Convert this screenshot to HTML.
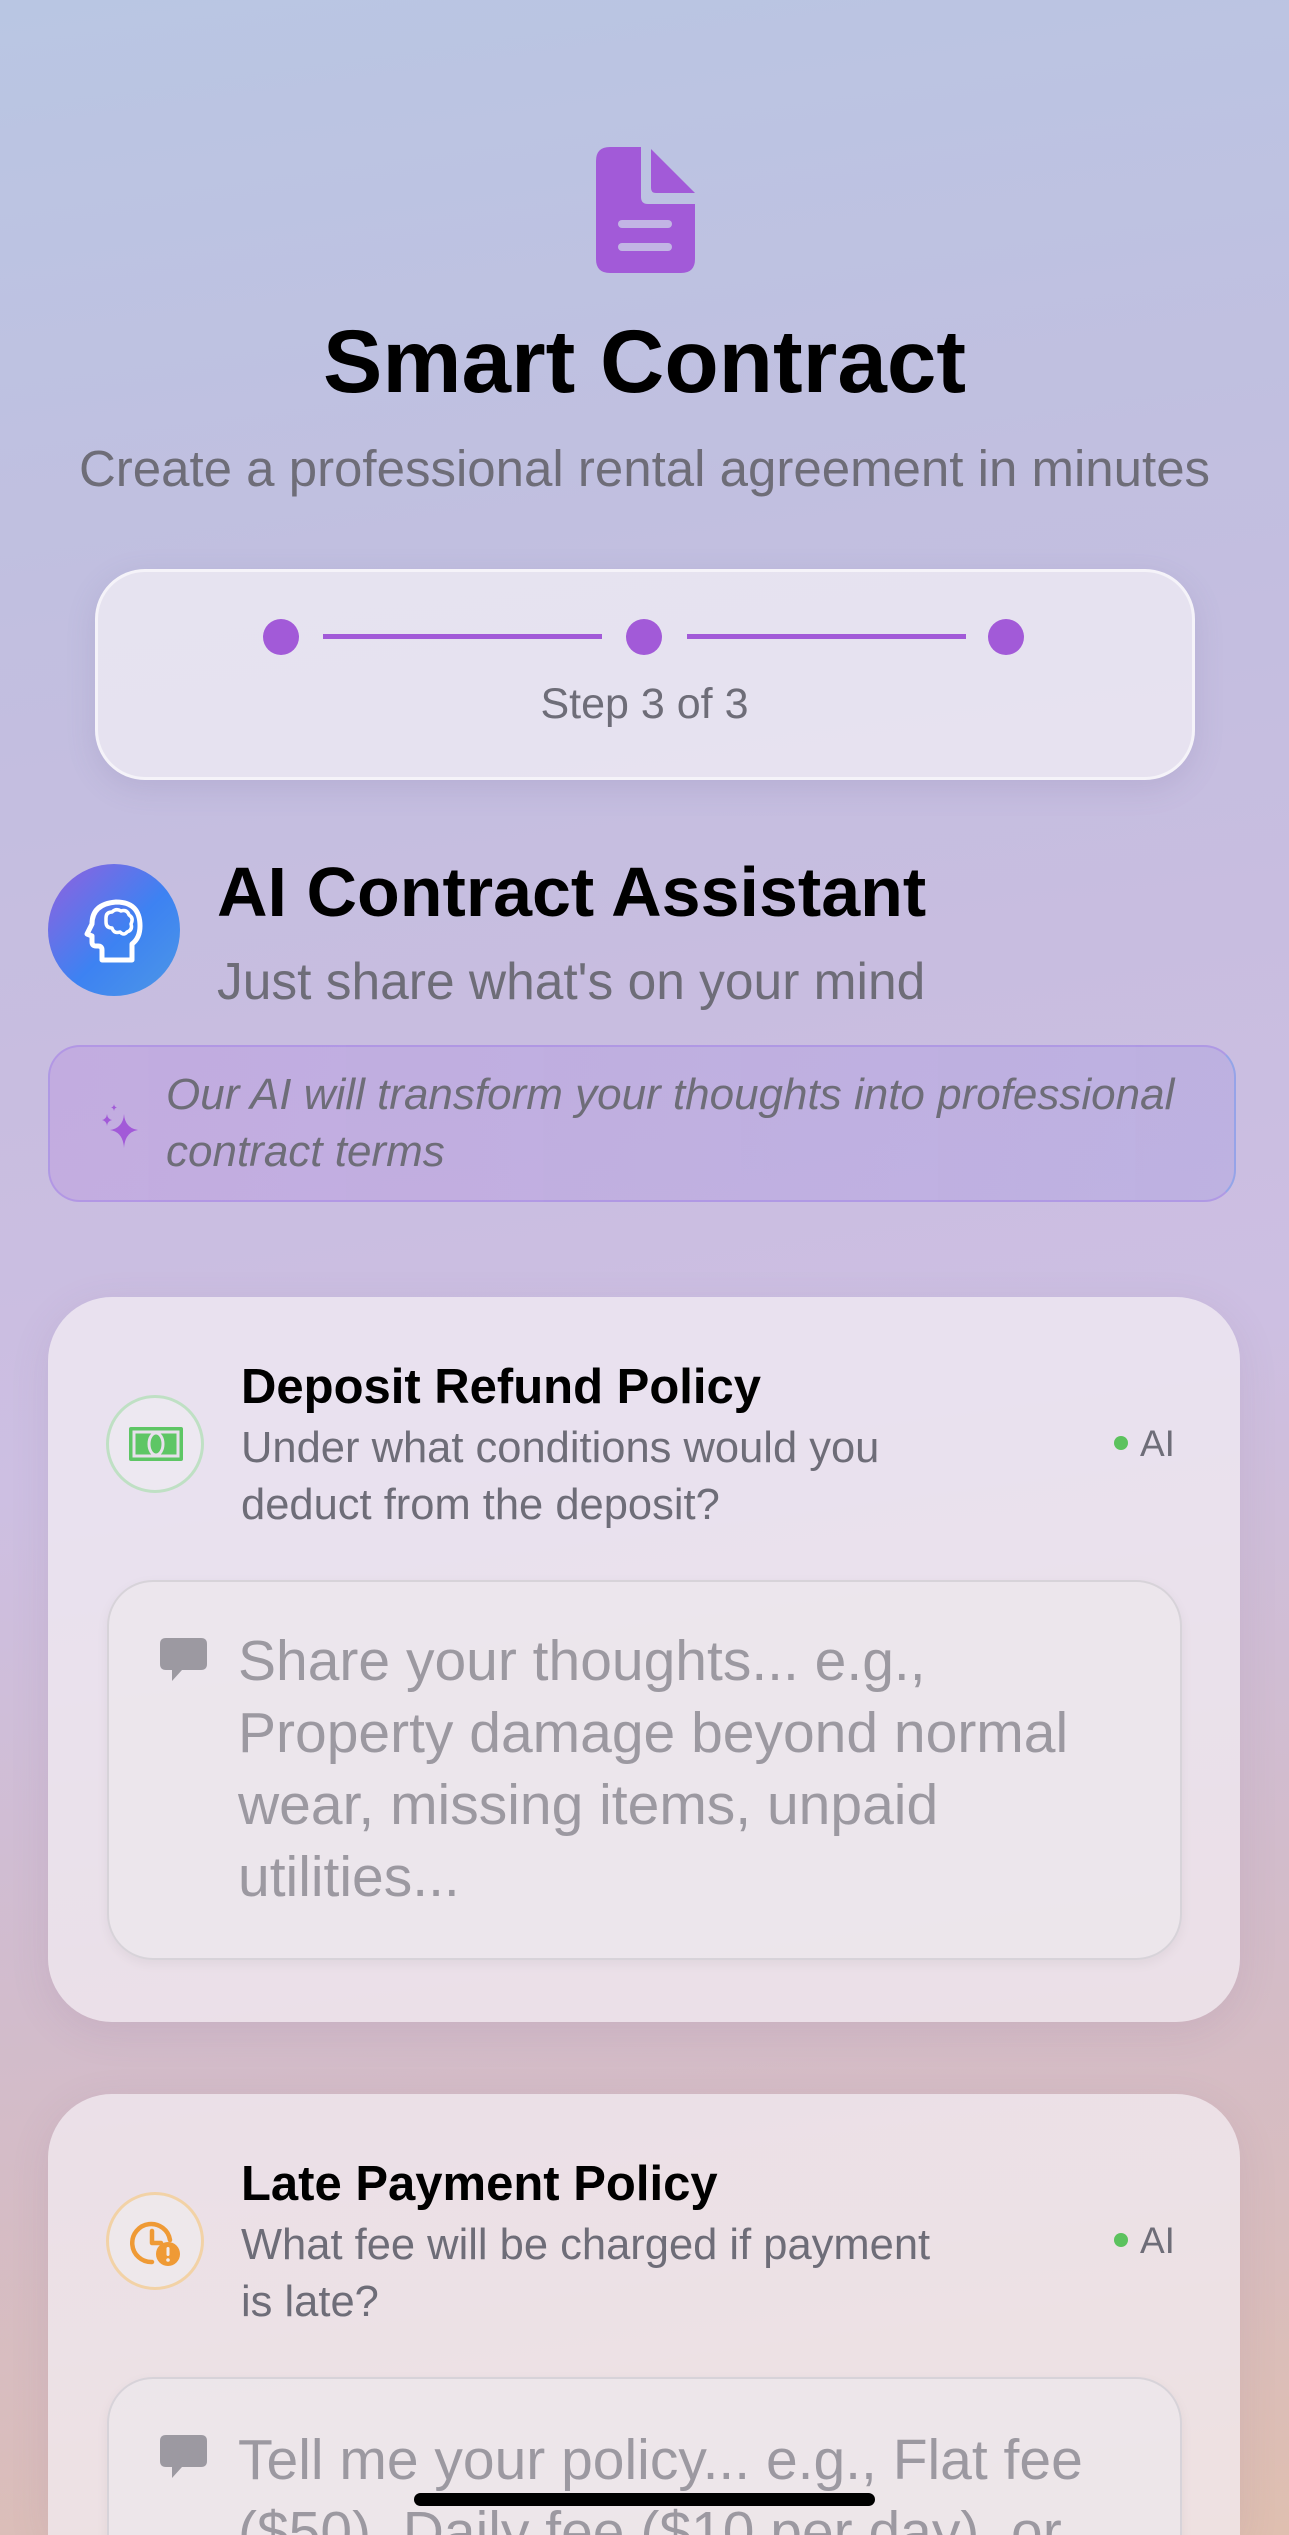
<!DOCTYPE html>
<html><head><meta charset="utf-8"><style>
*{margin:0;padding:0;box-sizing:border-box}
html{width:1289px;height:2535px;overflow:hidden;background:#d9bdbd}
body{width:1289px;height:2535px;overflow:hidden;position:relative;font-family:"Liberation Sans",sans-serif;
background:linear-gradient(172deg,#b9c6e3 0%,#c1bfe0 22%,#c8bde0 40%,#cdbfe2 55%,#d2bccb 75%,#d9bdbd 90%,#dfbfb0 100%);}
.abs{position:absolute}
.gray{color:#6e6d78}
.card{position:absolute;left:48px;width:1192px;border-radius:64px;background:rgba(244,238,244,0.72);box-shadow:0 10px 40px rgba(120,90,130,0.12);overflow:hidden}
.ta{position:absolute;left:59px;width:1075px;border-radius:46px;background:rgba(236,232,236,0.7);border:2px solid rgba(210,205,212,0.8);box-shadow:0 4px 12px rgba(0,0,0,0.05)}
.ph{position:absolute;left:190px;font-size:57px;line-height:72px;color:#9c99a1;width:900px}
.ttl{position:absolute;left:193px;font-weight:bold;font-size:49px;color:#000}
.desc{position:absolute;left:193px;font-size:43.5px;line-height:57px;color:#6e6d78;width:710px}
.ai{position:absolute;left:1066px;font-size:37px;color:#6e6d78}
.ai:before{content:"";display:inline-block;width:14px;height:14px;border-radius:50%;background:#5cc25e;margin-right:12px;vertical-align:middle;position:relative;top:-3px}
.ic{position:absolute;left:58px;width:98px;height:98px;border-radius:50%}
</style></head><body>

<svg class="abs" style="left:596px;top:147px" width="99" height="126" viewBox="0 0 99 126">
<path d="M14 0H45V50Q45 57 52 57H99V112Q99 126 85 126H14Q0 126 0 112V14Q0 0 14 0Z" fill="#a25ad8"/>
<path d="M55 2L99 46H60Q55 46 55 41Z" fill="#a25ad8"/>
<rect x="22" y="73" width="54" height="8" rx="4" fill="#c2b5e4"/>
<rect x="22" y="96" width="54" height="8" rx="4" fill="#c2b5e4"/>
</svg>

<div class="abs" style="left:0;width:1289px;top:310px;text-align:center;font-weight:bold;font-size:89px;color:#000">Smart Contract</div>
<div class="abs gray" style="left:0;width:1289px;top:439px;text-align:center;font-size:51px">Create a professional rental agreement in minutes</div>

<div class="abs" style="left:95px;top:569px;width:1100px;height:211px;border-radius:50px;background:rgba(236,233,242,0.85);border:3px solid rgba(255,255,255,0.6);box-shadow:0 8px 30px rgba(100,90,140,0.15)"></div>
<div class="abs" style="left:263px;top:619px;width:36px;height:36px;border-radius:50%;background:#a25ad8"></div>
<div class="abs" style="left:626px;top:619px;width:36px;height:36px;border-radius:50%;background:#a25ad8"></div>
<div class="abs" style="left:988px;top:619px;width:36px;height:36px;border-radius:50%;background:#a25ad8"></div>
<div class="abs" style="left:323px;top:634px;width:279px;height:5px;background:#a25ad8"></div>
<div class="abs" style="left:687px;top:634px;width:279px;height:5px;background:#a25ad8"></div>
<div class="abs gray" style="left:0;width:1289px;top:680px;text-align:center;font-size:43px">Step 3 of 3</div>

<div class="abs" style="left:48px;top:864px;width:132px;height:132px;border-radius:50%;background:linear-gradient(135deg,#9360de 0%,#3d82f2 55%,#4d97e6 100%)"></div>
<svg class="abs" style="left:84px;top:898px" width="62" height="66" viewBox="0 0 62 66" fill="none" stroke="#fff" stroke-width="5" stroke-linejoin="round" stroke-linecap="round">
<path d="M18 62V52Q18 48 14 48H12Q8 48 8 44V38L3 36L8 26Q8 6 32 4Q56 4 56 28Q56 40 48 46V62Z"/>
<path d="M22 20Q22 14 28 14Q32 10 37 13Q43 11 45 17Q50 20 47 26Q49 32 43 34Q40 38 36 34Q30 36 28 30Q22 30 22 24Z" stroke-width="3.5"/>
</svg>
<div class="abs" style="left:217px;top:852px;font-weight:bold;font-size:70px;color:#000">AI Contract Assistant</div>
<div class="abs gray" style="left:217px;top:951px;font-size:51.5px">Just share what's on your mind</div>

<div class="abs" style="left:48px;top:1045px;width:1188px;height:157px;border-radius:32px;background:linear-gradient(90deg,rgba(180,130,225,0.28),rgba(160,150,225,0.3));border:2px solid rgba(160,130,230,0.5);border-right-color:rgba(130,160,235,0.7)"></div>
<svg class="abs" style="left:98px;top:1100px" width="42" height="50" viewBox="0 0 42 50" fill="#a25ad8">
<path d="M26 14Q27 28 40 30Q27 32 26 48Q25 32 12 30Q25 28 26 14Z"/>
<path d="M9 14Q9.5 19 14 20Q9.5 21 9 26Q8.5 21 4 20Q8.5 19 9 14Z"/>
<path d="M16 4Q16.3 7 19 7.5Q16.3 8 16 11Q15.7 8 13 7.5Q15.7 7 16 4Z"/>
</svg>
<div class="abs gray" style="left:166px;top:1066px;font-size:44px;line-height:57px;font-style:italic;width:1065px">Our AI will transform your thoughts into professional contract terms</div>

<div class="card" style="top:1297px;height:725px">
  <div class="ic" style="top:98px;border:3px solid #bfe0c4;background:rgba(240,236,242,0.6)"></div>
  <svg class="abs" style="left:81px;top:130px" width="54" height="34" viewBox="0 0 54 34">
    <rect x="0" y="0" width="54" height="34" rx="2" fill="#5ec665"/>
    <rect x="5" y="5" width="44" height="24" fill="none" stroke="#e8e0ec" stroke-width="3"/>
    <ellipse cx="27" cy="17" rx="7" ry="11" fill="none" stroke="#e8e0ec" stroke-width="3"/>
  </svg>
  <div class="ttl" style="top:62px">Deposit Refund Policy</div>
  <div class="desc" style="top:123px">Under what conditions would you deduct from the deposit?</div>
  <div class="ai" style="top:126px">AI</div>
  <div class="ta" style="top:283px;height:380px"></div>
  <svg class="abs" style="left:112px;top:341px" width="47" height="44" viewBox="0 0 47 44"><path d="M6 0H41Q47 0 47 6V26Q47 32 41 32H22L12 43V32H6Q0 32 0 26V6Q0 0 6 0Z" fill="#9c99a1"/></svg>
  <div class="ph" style="top:328px">Share your thoughts... e.g., Property damage beyond normal wear, missing items, unpaid utilities...</div>
</div>

<div class="card" style="top:2094px;height:441px;border-bottom-left-radius:0;border-bottom-right-radius:0">
  <div class="ic" style="top:98px;border:3px solid #f2d2a6;background:rgba(240,236,238,0.6)"></div>
  <svg class="abs" style="left:82px;top:126px" width="52" height="48" viewBox="0 0 52 48" fill="none">
    <path d="M22 42A19 19 0 1 1 40 20" stroke="#ef9a35" stroke-width="4.5" stroke-linecap="round"/>
    <path d="M22 11V23H31" stroke="#ef9a35" stroke-width="4.5" stroke-linecap="round" stroke-linejoin="round"/>
    <circle cx="38" cy="34" r="12" fill="#ef9a35"/>
    <rect x="36.5" y="27" width="3" height="9" rx="1.5" fill="#f1ecee"/>
    <circle cx="38" cy="40" r="1.8" fill="#f1ecee"/>
  </svg>
  <div class="ttl" style="top:62px">Late Payment Policy</div>
  <div class="desc" style="top:123px">What fee will be charged if payment is late?</div>
  <div class="ai" style="top:126px">AI</div>
  <div class="ta" style="top:283px;height:380px"></div>
  <svg class="abs" style="left:112px;top:341px" width="47" height="44" viewBox="0 0 47 44"><path d="M6 0H41Q47 0 47 6V26Q47 32 41 32H22L12 43V32H6Q0 32 0 26V6Q0 0 6 0Z" fill="#9c99a1"/></svg>
  <div class="ph" style="top:330px">Tell me your policy... e.g., Flat fee ($50), Daily fee ($10 per day), or</div>
</div>

<div class="abs" style="left:414px;top:2493px;width:461px;height:13px;border-radius:7px;background:#000"></div>
</body></html>
